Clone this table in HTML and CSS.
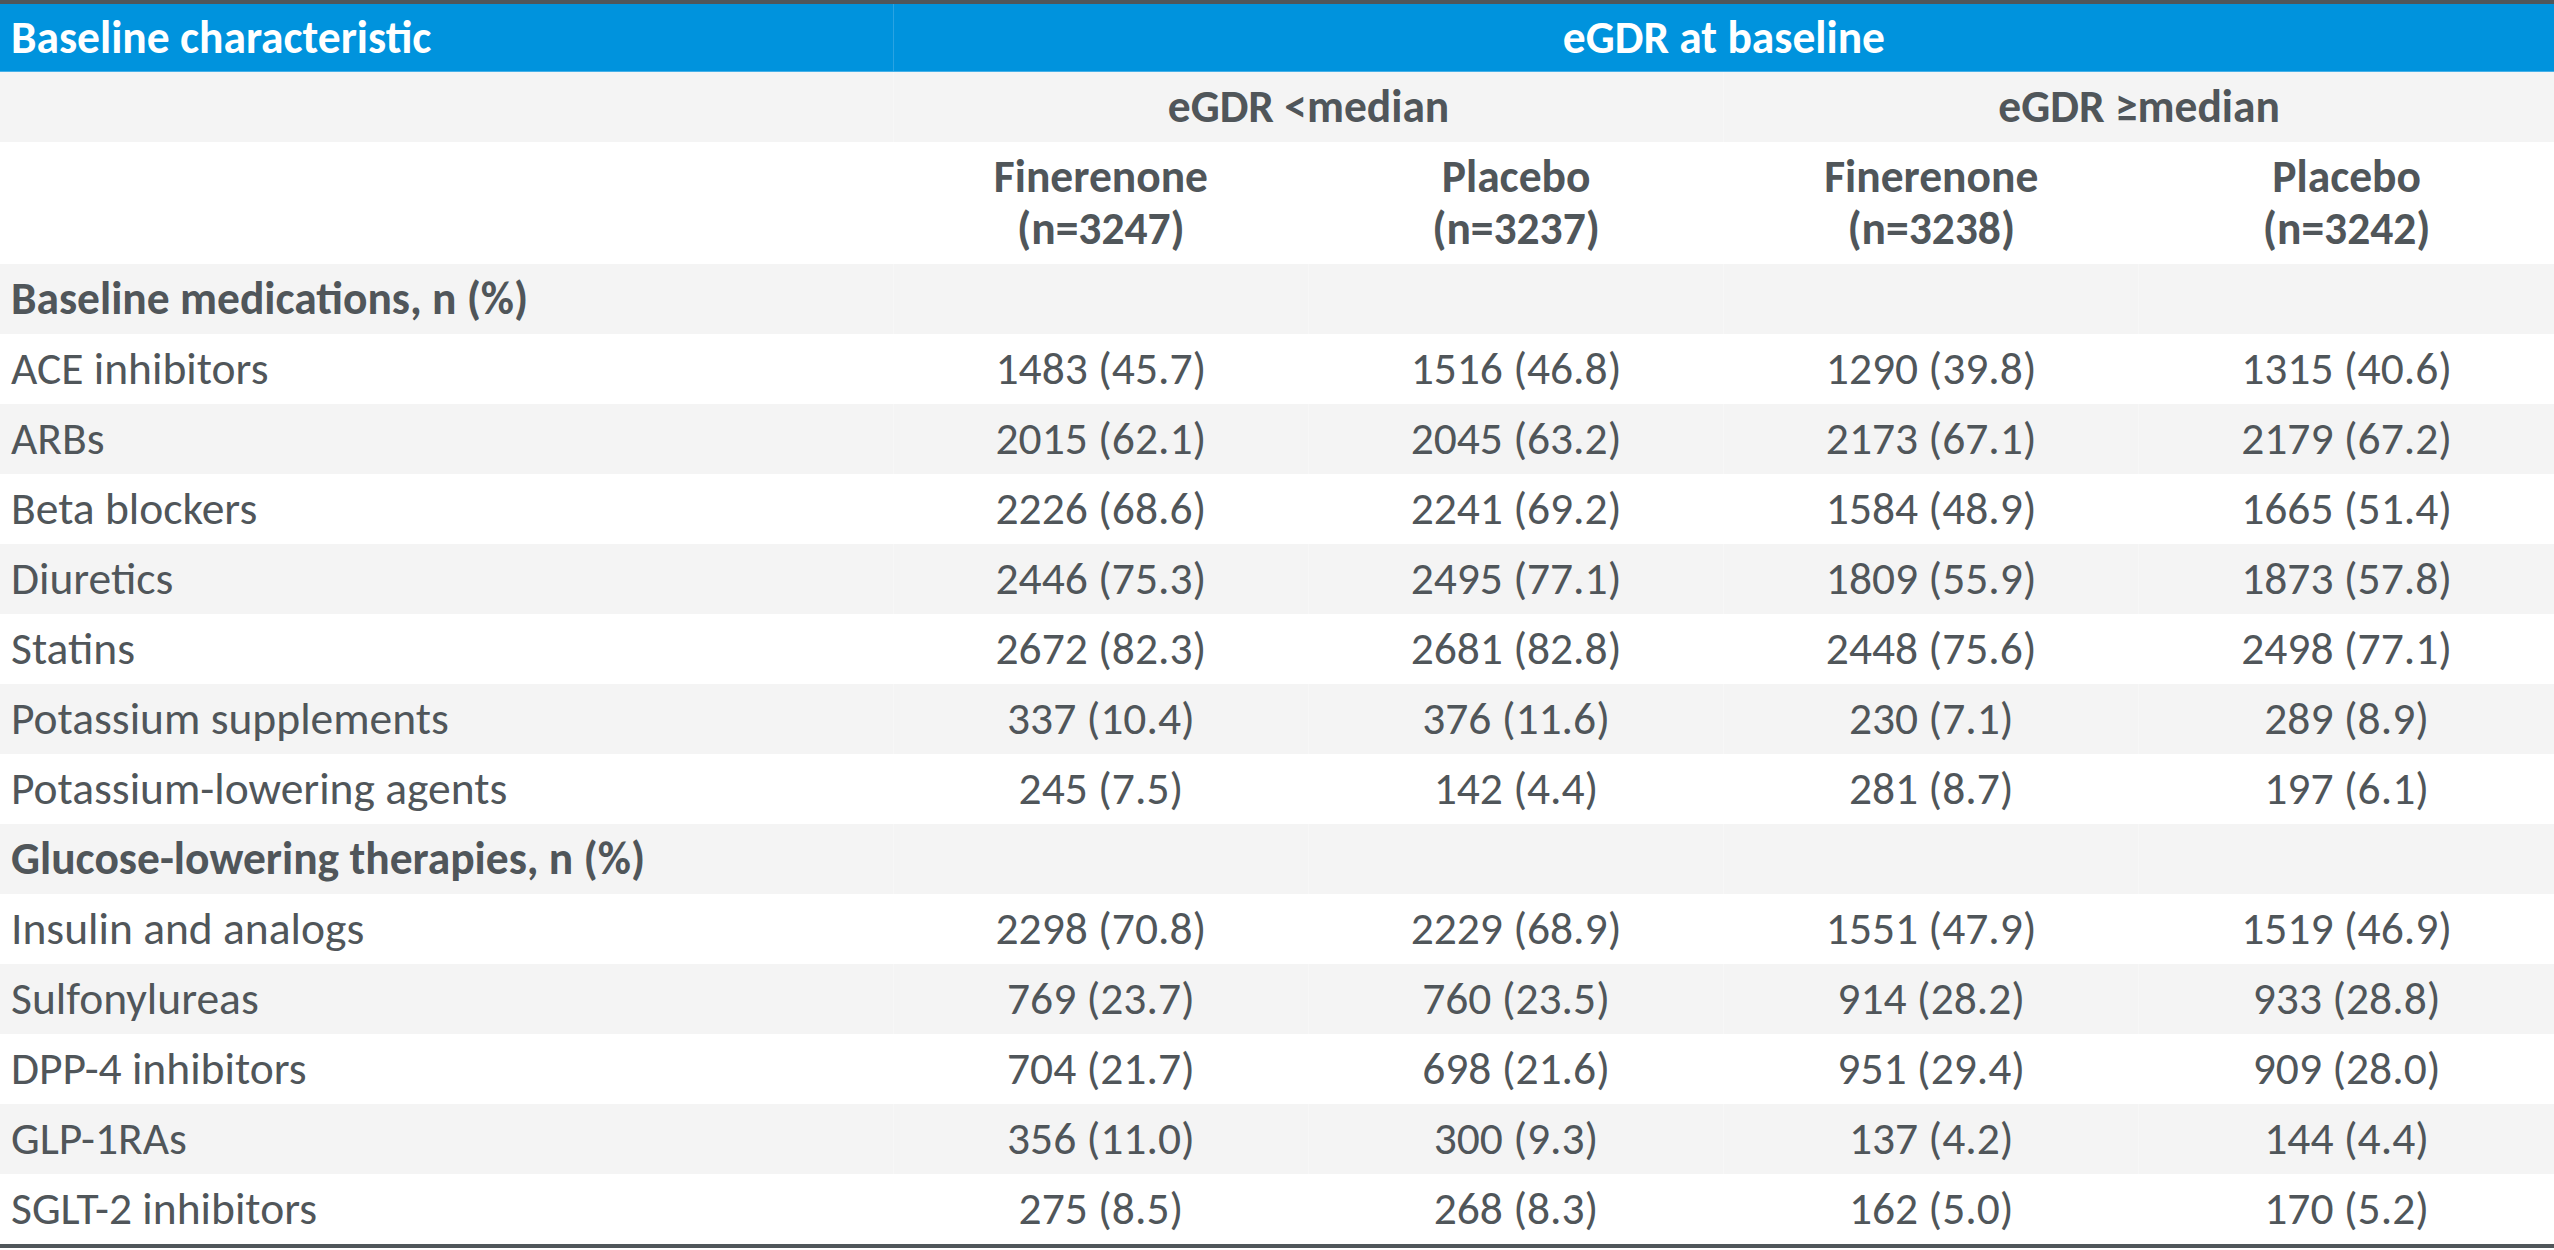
FILE: index.html
```html
<!DOCTYPE html>
<html>
<head>
<meta charset="utf-8">
<link rel="stylesheet" href="styles.css">
</head>
<body>
<table class="tbl">
  <colgroup>
    <col class="c-label"><col class="c-val"><col class="c-val"><col class="c-val"><col class="c-val">
  </colgroup>
  <thead>
    <tr class="top">
      <th class="lbl">Baseline characteristic</th>
      <th colspan="4">eGDR at baseline</th>
    </tr>
    <tr class="grey sub">
      <th></th>
      <th colspan="2">eGDR &lt;median</th>
      <th colspan="2">eGDR ≥median</th>
    </tr>
    <tr class="arms">
      <th></th>
      <th>Finerenone<br>(n=3247)</th>
      <th>Placebo<br>(n=3237)</th>
      <th>Finerenone<br>(n=3238)</th>
      <th>Placebo<br>(n=3242)</th>
    </tr>
  </thead>
  <tbody>
    <tr class="grey sect"><td class="lbl">Baseline medications, n (%)</td><td></td><td></td><td></td><td></td></tr>
    <tr><td class="lbl">ACE inhibitors</td><td>1483 (45.7)</td><td>1516 (46.8)</td><td>1290 (39.8)</td><td>1315 (40.6)</td></tr>
    <tr class="grey"><td class="lbl">ARBs</td><td>2015 (62.1)</td><td>2045 (63.2)</td><td>2173 (67.1)</td><td>2179 (67.2)</td></tr>
    <tr><td class="lbl">Beta blockers</td><td>2226 (68.6)</td><td>2241 (69.2)</td><td>1584 (48.9)</td><td>1665 (51.4)</td></tr>
    <tr class="grey"><td class="lbl">Diuretics</td><td>2446 (75.3)</td><td>2495 (77.1)</td><td>1809 (55.9)</td><td>1873 (57.8)</td></tr>
    <tr><td class="lbl">Statins</td><td>2672 (82.3)</td><td>2681 (82.8)</td><td>2448 (75.6)</td><td>2498 (77.1)</td></tr>
    <tr class="grey"><td class="lbl">Potassium supplements</td><td>337 (10.4)</td><td>376 (11.6)</td><td>230 (7.1)</td><td>289 (8.9)</td></tr>
    <tr><td class="lbl">Potassium-lowering agents</td><td>245 (7.5)</td><td>142 (4.4)</td><td>281 (8.7)</td><td>197 (6.1)</td></tr>
    <tr class="grey sect"><td class="lbl">Glucose-lowering therapies, n (%)</td><td></td><td></td><td></td><td></td></tr>
    <tr><td class="lbl">Insulin and analogs</td><td>2298 (70.8)</td><td>2229 (68.9)</td><td>1551 (47.9)</td><td>1519 (46.9)</td></tr>
    <tr class="grey"><td class="lbl">Sulfonylureas</td><td>769 (23.7)</td><td>760 (23.5)</td><td>914 (28.2)</td><td>933 (28.8)</td></tr>
    <tr><td class="lbl">DPP-4 inhibitors</td><td>704 (21.7)</td><td>698 (21.6)</td><td>951 (29.4)</td><td>909 (28.0)</td></tr>
    <tr class="grey"><td class="lbl">GLP-1RAs</td><td>356 (11.0)</td><td>300 (9.3)</td><td>137 (4.2)</td><td>144 (4.4)</td></tr>
    <tr><td class="lbl">SGLT-2 inhibitors</td><td>275 (8.5)</td><td>268 (8.3)</td><td>162 (5.0)</td><td>170 (5.2)</td></tr>
  </tbody>
</table>
</body>
</html>
```

FILE: styles.css
```css
html, body {
  margin: 0;
  padding: 0;
  background: #ffffff;
}

body {
  font-family: Carlito, Calibri, "Liberation Sans Narrow", "Open Sans", sans-serif;
  color: #50565a;
}

.tbl {
  width: 2554px;
  border-collapse: collapse;
  table-layout: fixed;
  border-top: 4px solid #50565a;
  border-bottom: 4px solid #50565a;
}

.c-label { width: 893px; }
.c-val { width: 415px; }

.tbl th,
.tbl td {
  padding: 0;
  text-align: center;
  vertical-align: middle;
  font-size: 45.5px;
  line-height: 52px;
  border-left: 1px solid rgba(255, 255, 255, 0.25);
}

.tbl th:first-child,
.tbl td:first-child {
  border-left: none;
}

.tbl th {
  font-weight: bold;
}

.tbl td {
  font-weight: normal;
  height: 70px;
}

.tbl .lbl {
  text-align: left;
  padding-left: 11px;
}

.top th {
  background: #0093dd;
  color: #ffffff;
  height: 67px;
  border-bottom: 1px solid #45b0e8;
  border-left: 1px solid #2aa3e2;
}

.sub th {
  height: 70px;
}

.arms th {
  height: 122px;
}

.grey th,
.grey td {
  background: #f4f4f4;
}

.sect td.lbl {
  font-weight: bold;
}
```
